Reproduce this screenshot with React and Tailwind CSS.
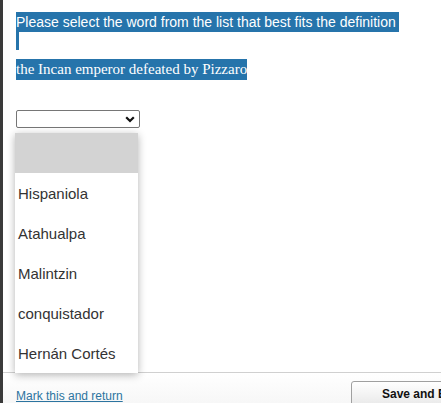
import React from "react";

export default function App() {
  const options = ["Hispaniola", "Atahualpa", "Malintzin", "conquistador", "Hernán Cortés"];
  return (
    <div className="relative flex h-[403px] w-[441px] overflow-hidden bg-white">
      <div className="w-[3px] shrink-0 bg-[#3a3a3a]" />
      <div className="flex flex-1 flex-col">
        <div className="flex-1 pl-[13px] pt-[12px]">
          <div className="font-['Liberation_Sans',Arial,sans-serif] text-[14px] text-white">
            <div className="h-[20px] w-fit bg-[#2674ab] pr-[3px] leading-[20px]">
              Please select the word from the list that best fits the definition
            </div>
            <div className="h-[18px] w-[3px] bg-[#2674ab]" />
          </div>
          <div className="mt-[9px] font-['Liberation_Serif','Times_New_Roman',serif] text-[15px] text-white">
            <div className="h-[21px] w-fit bg-[#2674ab] leading-[21px]">
              the Incan emperor defeated by Pizzaro
            </div>
          </div>
          <div className="relative mt-[30px]">
            <div className="flex h-[18px] w-[124px] items-center justify-end rounded-[2px] border border-[#767676] bg-white pr-[4px]">
              <svg width="10" height="7" viewBox="0 0 10 7">
                <path d="M1.2 1.2 L5 5 L8.8 1.2" fill="none" stroke="#111" strokeWidth="2.2" />
              </svg>
            </div>
            <div className="absolute left-[-1px] top-[23px] z-10 w-[123px] bg-white font-['Liberation_Sans',Arial,sans-serif] text-[15px] text-[#333] shadow-[0_2px_8px_rgba(0,0,0,0.3)]">
              <div className="h-[40px] bg-[#d3d3d3]" />
              {options.map((o) => (
                <div key={o} className="flex h-[40px] items-center pl-[3px] pt-[2px]">
                  {o}
                </div>
              ))}
            </div>
          </div>
        </div>
        <div className="flex h-[31px] shrink-0 items-start justify-between border-t border-[#d0d0d0] bg-gradient-to-b from-white to-[#f7f7f7] pl-[13px]">
          <a className="mt-[16px] font-['Liberation_Sans',Arial,sans-serif] text-[12px] leading-[14px] text-[#2c74a0] underline">
            Mark this and return
          </a>
          <button className="mt-[8px] mr-[-60px] h-[26px] w-[150px] rounded-[3px] border border-[#a0a0a0] bg-gradient-to-b from-white to-[#e8e8e8] pl-[30px] text-left font-['Liberation_Sans',Arial,sans-serif] text-[12px] font-bold text-[#111]">
            Save and Exit
          </button>
        </div>
      </div>
    </div>
  );
}
